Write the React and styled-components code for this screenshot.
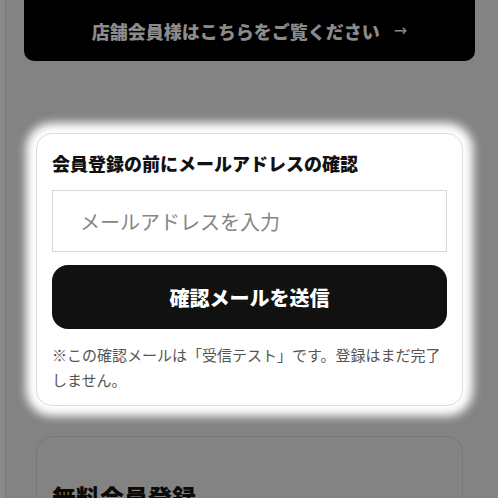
import React from 'react';
import styled, { createGlobalStyle } from 'styled-components';

const GlobalStyle = createGlobalStyle`
  html, body {
    margin: 0;
    padding: 0;
    background: #898989;
  }
  body {
    font-family: "Noto Sans CJK JP", "Noto Sans", sans-serif;
    -webkit-font-smoothing: antialiased;
  }
  * {
    box-sizing: border-box;
  }
`;

const Frame = styled.div`
  margin-left: 5px;
  min-height: 100vh;
  border-left: 1px solid #777777;
  background: #838383;
  padding: 0 23px 0 18px;
  display: flex;
  flex-direction: column;
  overflow: hidden;
`;

const StoreLink = styled.a`
  display: flex;
  align-items: center;
  justify-content: center;
  gap: 14px;
  height: 61px;
  background: #000;
  border-radius: 0 0 10px 10px;
  color: #8b8b8b;
  font-size: 18px;
  font-weight: 900;
  text-decoration: none;
`;

const Arrow = styled.span`
  font-size: 16px;
  font-weight: 400;
  color: #8b8b8b;
  font-family: "DejaVu Sans", sans-serif;
`;

const Stack = styled.div`
  display: flex;
  flex-direction: column;
  gap: 30px;
  margin-top: 72px;
  padding: 0 12px;
`;

const Card = styled.section`
  position: relative;
  z-index: 1;
  background: ${(props) => (props.$dimmed ? 'transparent' : '#ffffff')};
  border: 1px solid ${(props) => (props.$dimmed ? '#777777' : '#dcdcdc')};
  border-radius: 16px;
  padding: ${(props) => (props.$dimmed ? '43px 15px 20px' : '17px 15px 13px')};
  box-shadow: ${(props) => (props.$dimmed ? 'none' : '0 0 10px 10px #ffffff')};
`;

const CardTitle = styled.h2`
  margin: 0;
  font-size: ${(props) => (props.$large ? '24px' : '18px')};
  line-height: ${(props) => (props.$large ? '34px' : '25px')};
  font-weight: 900;
  color: ${(props) => (props.$large ? '#0a0a0a' : '#111111')};
`;

const EmailInput = styled.input`
  display: block;
  width: 100%;
  height: 62px;
  margin-top: 14px;
  padding: 0 27px;
  border: 1px solid #d6d6d6;
  border-radius: 0;
  outline: none;
  font-family: "Noto Sans CJK JP", sans-serif;
  font-size: 20px;
  font-weight: 400;
  color: #222;

  &::placeholder {
    color: #858585;
  }
`;

const SendButton = styled.button`
  display: block;
  width: 100%;
  height: 64px;
  margin-top: 13px;
  border: none;
  border-radius: 16px;
  background: #111111;
  color: #ffffff;
  font-family: "Noto Sans CJK JP", sans-serif;
  font-size: 20px;
  font-weight: 900;
  cursor: pointer;
`;

const Note = styled.p`
  margin: 13px 0 0;
  font-size: 15px;
  line-height: 25px;
  color: #555555;
`;

export default function App() {
  return (
    <>
      <GlobalStyle />
      <Frame>
        <StoreLink href="#">
          <span>店舗会員様はこちらをご覧ください</span>
          <Arrow>→</Arrow>
        </StoreLink>
        <Stack>
          <Card>
            <CardTitle>会員登録の前にメールアドレスの確認</CardTitle>
            <EmailInput type="email" placeholder="メールアドレスを入力" />
            <SendButton type="button">確認メールを送信</SendButton>
            <Note>※この確認メールは「受信テスト」です。登録はまだ完了しません。</Note>
          </Card>
          <Card $dimmed>
            <CardTitle $large>無料会員登録</CardTitle>
          </Card>
        </Stack>
      </Frame>
    </>
  );
}
